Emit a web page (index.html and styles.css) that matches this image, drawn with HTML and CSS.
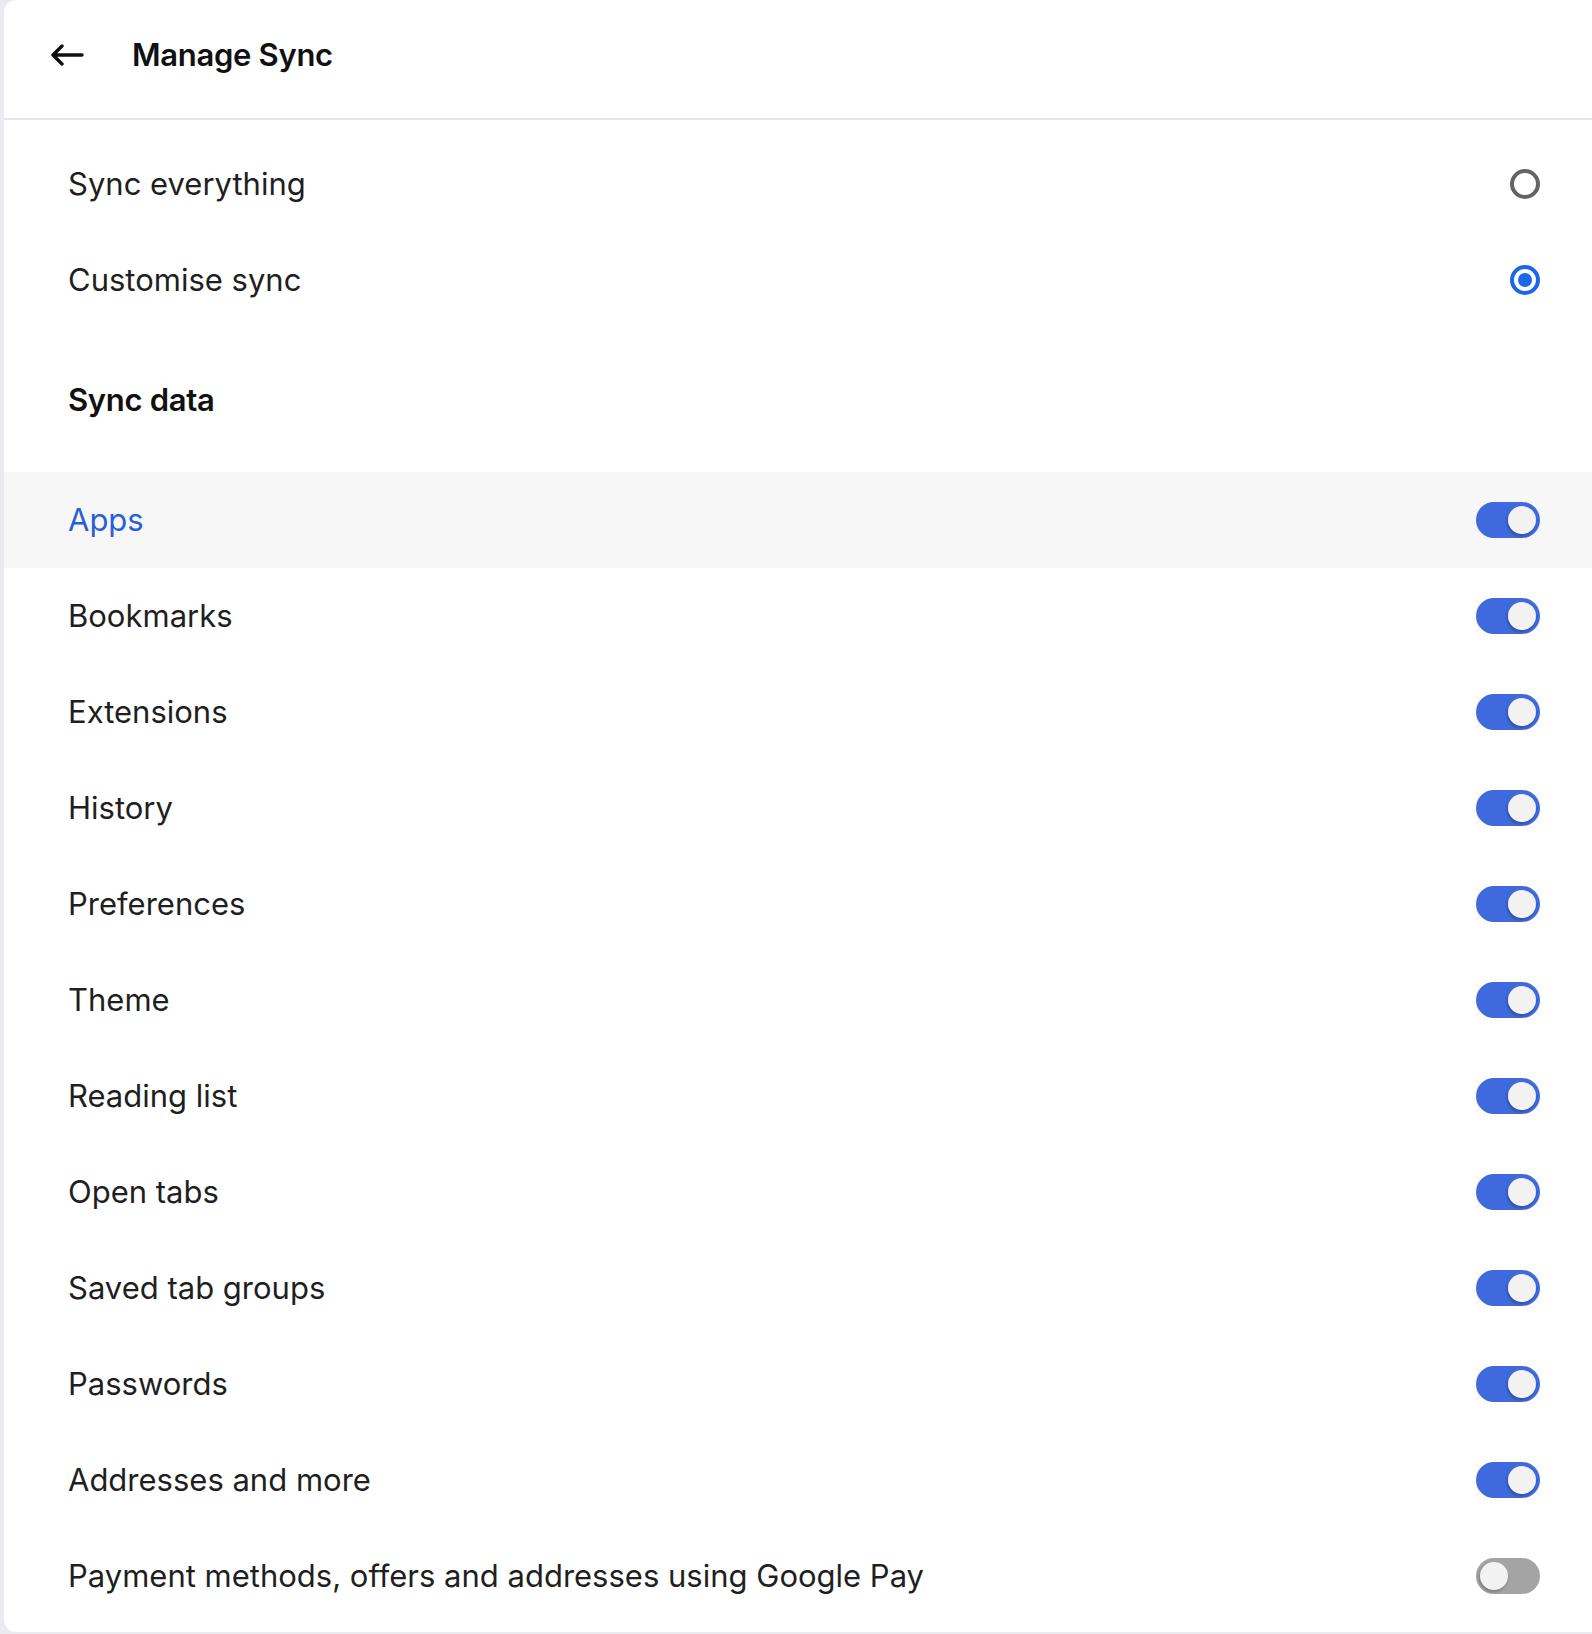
FILE: index.html
```html
<!DOCTYPE html>
<html lang="en">
<head>
<meta charset="utf-8">
<title>Manage Sync</title>
<link rel="stylesheet" href="styles.css">
</head>
<body>
<div class="card">
  <header class="header">
    <button class="back" aria-label="Back">
      <svg width="34" height="22" viewBox="0 0 34 22" fill="none" stroke="#111" stroke-width="3.4" stroke-linecap="round" stroke-linejoin="round"><path d="M3 11H32M12 2L3 11L12 20"/></svg>
    </button>
    <h1 class="title">Manage Sync</h1>
  </header>
  <div class="options">
    <div class="row"><span class="label">Sync everything</span><span class="radio"></span></div>
    <div class="row"><span class="label">Customise sync</span><span class="radio checked"></span></div>
  </div>
  <h2 class="section">Sync data</h2>
  <div class="list">
    <div class="row hover"><span class="label link">Apps</span><span class="toggle on"></span></div>
    <div class="row"><span class="label">Bookmarks</span><span class="toggle on"></span></div>
    <div class="row"><span class="label">Extensions</span><span class="toggle on"></span></div>
    <div class="row"><span class="label">History</span><span class="toggle on"></span></div>
    <div class="row"><span class="label">Preferences</span><span class="toggle on"></span></div>
    <div class="row"><span class="label">Theme</span><span class="toggle on"></span></div>
    <div class="row"><span class="label">Reading list</span><span class="toggle on"></span></div>
    <div class="row"><span class="label">Open tabs</span><span class="toggle on"></span></div>
    <div class="row"><span class="label">Saved tab groups</span><span class="toggle on"></span></div>
    <div class="row"><span class="label">Passwords</span><span class="toggle on"></span></div>
    <div class="row"><span class="label">Addresses and more</span><span class="toggle on"></span></div>
    <div class="row"><span class="label">Payment methods, offers and addresses using Google Pay</span><span class="toggle"></span></div>
  </div>
</div>
</body>
</html>
```
FILE: styles.css
```css
html, body {
  margin: 0;
  padding: 0;
}
body {
  background: #ebebef;
  font-family: Inter, "Noto Sans", sans-serif;
  color: #1f1f1f;
  overflow: hidden;
}
.card {
  margin-left: 4px;
  background: #fff;
  border-radius: 12px 0 0 12px;
  height: 1632px;
  box-sizing: border-box;
}
.header {
  height: 120px;
  box-sizing: border-box;
  border-bottom: 2px solid #e6e6ea;
  display: flex;
  align-items: center;
  padding: 0 0 10px 46px;
}
.back {
  border: 0;
  background: none;
  padding: 0;
  margin: 2px 0 0 0;
  width: 34px;
  height: 22px;
  display: flex;
}
.title {
  margin: 0 0 0 48px;
  font-size: 31px;
  font-weight: 600;
  color: #111;
  letter-spacing: -0.3px;
}
.options {
  padding-top: 16px;
}
.row {
  height: 96px;
  display: flex;
  align-items: center;
  justify-content: space-between;
  padding: 0 52px 0 64px;
}
.label {
  font-size: 31px;
  color: #1f1f1f;
  padding-bottom: 2px;
}
.label.link {
  color: #2b5ed9;
}
.row.hover {
  background: #f7f7f7;
}
.section {
  margin: 0;
  height: 144px;
  display: flex;
  align-items: center;
  padding-left: 64px;
  padding-bottom: 2px;
  box-sizing: border-box;
  font-size: 31px;
  font-weight: 600;
  letter-spacing: -0.3px;
  color: #111;
}
.radio {
  width: 30px;
  height: 30px;
  box-sizing: border-box;
  border-radius: 50%;
  border: 4px solid #646464;
}
.radio.checked {
  border-color: #1b67e9;
  position: relative;
}
.radio.checked::after {
  content: "";
  position: absolute;
  left: 4px;
  top: 4px;
  width: 14px;
  height: 14px;
  border-radius: 50%;
  background: #1b67e9;
}
.toggle {
  width: 64px;
  height: 36px;
  border-radius: 18px;
  background: #a4a4a4;
  position: relative;
}
.toggle::after {
  content: "";
  position: absolute;
  top: 4px;
  left: 4px;
  width: 28px;
  height: 28px;
  border-radius: 50%;
  background: #f2f2f2;
  box-shadow: -1px 2px 3px rgba(0,0,0,0.25);
}
.toggle.on {
  background: #3f69dd;
}
.toggle.on::after {
  left: 32px;
}
```
